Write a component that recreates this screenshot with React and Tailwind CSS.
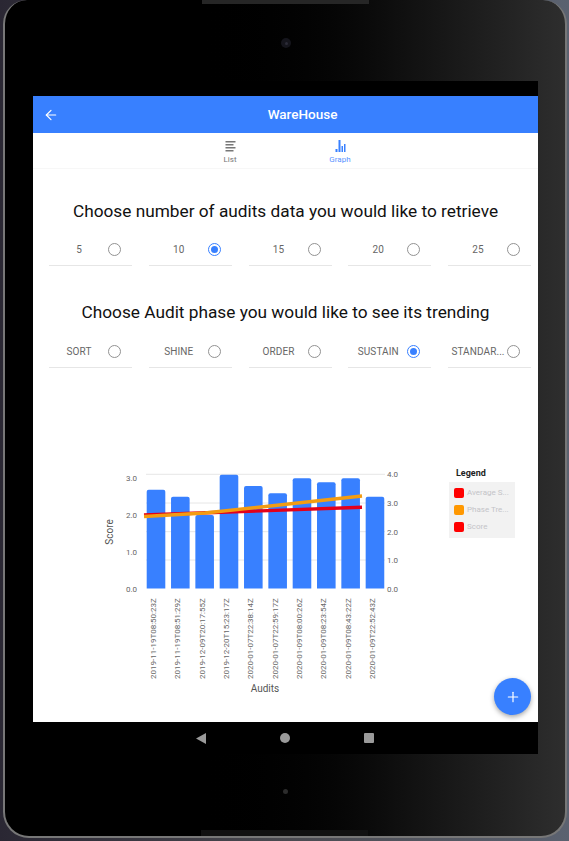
import { ArrowLeft, Plus } from "lucide-react";

const counts = ["5", "10", "15", "20", "25"];
const phases = ["SORT", "SHINE", "ORDER", "SUSTAIN", "STANDAR..."];

const bars = [489.7, 496.7, 515, 474.7, 486, 493.3, 478.3, 482.3, 478.3, 496.7];
const dates = [
  "2019-11-19T08:50:23Z",
  "2019-11-19T08:51:29Z",
  "2019-12-09T20:17:55Z",
  "2019-12-20T15:23:17Z",
  "2020-01-07T22:38:14Z",
  "2020-01-07T22:59:17Z",
  "2020-01-09T08:00:26Z",
  "2020-01-09T08:23:54Z",
  "2020-01-09T08:43:22Z",
  "2020-01-09T22:52:43Z",
];

function Radio({ on }) {
  return (
    <span
      className={`flex h-[13px] w-[13px] shrink-0 items-center justify-center rounded-full border-[1.5px] ${
        on ? "border-[#3880ff]" : "border-[#929292]"
      }`}
    >
      {on && <span className="h-[7px] w-[7px] rounded-full bg-[#3880ff]" />}
    </span>
  );
}

function RadioRow({ items, selected, rowClass }) {
  return (
    <div className={`flex justify-between pl-4 pr-[7px] ${rowClass}`}>
      {items.map((item) => (
        <div
          key={item}
          className="flex h-[33px] w-[83px] items-center border-b border-[#e6e6e6] pr-[11px]"
        >
          <span className="flex-1 whitespace-nowrap pl-[1px] text-center text-[10px] tracking-[0.1px] text-[#666]">
            {item}
          </span>
          <Radio on={item === selected} />
        </div>
      ))}
    </div>
  );
}

function Chart() {
  const gridLines = [474.3, 503, 531.7, 560];
  const left = [
    ["3.0", 481],
    ["2.0", 518],
    ["1.0", 555],
    ["0.0", 592],
  ];
  const right = [
    ["4.0", 477],
    ["3.0", 506],
    ["2.0", 535],
    ["1.0", 563],
    ["0.0", 592],
  ];
  return (
    <svg width="335" height="235" viewBox="95 465 335 235" className="shrink-0">
      {gridLines.map((y) => (
        <line key={y} x1="146" x2="385" y1={y} y2={y} stroke="#e6e6e6" strokeWidth="1" />
      ))}
      {bars.map((top, i) => {
        const x = 146.7 + i * 24.33;
        return (
          <path
            key={i}
            d={`M${x} 588.6V${top + 2}a2 2 0 0 1 2-2h14.6a2 2 0 0 1 2 2V588.6Z`}
            fill="#3880ff"
          />
        );
      })}
      <line x1="144" y1="515" x2="362" y2="507.3" stroke="#e3001b" strokeWidth="3.4" />
      <polyline
        points="144,516.5 205,513 362,496"
        fill="none"
        stroke="#f39c12"
        strokeWidth="3.4"
      />
      <g fontSize="8" fill="#666">
        {left.map(([t, y]) => (
          <text key={t} x="137" y={y} textAnchor="end">
            {t}
          </text>
        ))}
        {right.map(([t, y]) => (
          <text key={t} x="387" y={y}>
            {t}
          </text>
        ))}
        {dates.map((d, i) => {
          const x = 156 + i * 24.33;
          return (
            <text key={d} transform={`translate(${x} 679) rotate(-90)`}>
              {d}
            </text>
          );
        })}
      </g>
      <text
        transform="translate(113 532) rotate(-90)"
        textAnchor="middle"
        fontSize="10"
        fill="#555"
      >
        Score
      </text>
      <text x="265" y="692" textAnchor="middle" fontSize="10" fill="#555">
        Audits
      </text>
    </svg>
  );
}

function Legend() {
  const rows = [
    ["Average S...", "bg-[#ff0000]"],
    ["Phase Tre...", "bg-[#ff9800]"],
    ["Score", "bg-[#ff0000]"],
  ];
  return (
    <div className="ml-[19px] mt-[3px] w-[66px]">
      <div className="pl-[7px] text-[9px] leading-[11px] font-bold text-[#222]">Legend</div>
      <div className="mt-[3px] flex h-[56px] flex-col justify-center gap-[7px] bg-[#f2f2f2] pl-[5px]">
        {rows.map(([label, color]) => (
          <div key={label} className="flex items-center gap-[3px]">
            <span className={`h-[10px] w-[10px] rounded-[2px] ${color}`} />
            <span className="text-[8px] leading-[10px] whitespace-nowrap text-[#c4c4c8]">
              {label}
            </span>
          </div>
        ))}
      </div>
    </div>
  );
}

function ListIcon() {
  return (
    <svg width="11" height="11" viewBox="0 0 11 11" fill="#777">
      <rect x="0.5" y="0" width="10" height="1.5" />
      <rect x="0.5" y="3" width="8" height="1.5" />
      <rect x="0.5" y="6" width="10" height="1.5" />
      <rect x="0.5" y="9" width="8" height="1.5" />
    </svg>
  );
}

function GraphIcon() {
  return (
    <svg width="11" height="12" viewBox="0 0 11 12" fill="#3880ff">
      <rect x="0.5" y="9" width="2" height="3" />
      <rect x="3.5" y="0" width="2" height="12" />
      <rect x="6.5" y="6" width="1.5" height="6" />
      <rect x="9" y="4" width="1.5" height="8" />
    </svg>
  );
}

export default function App() {
  return (
    <div className="h-[841px] w-[569px] overflow-hidden bg-gradient-to-r from-[#2a2733] via-[#4a4a50] to-[#5b6270] pl-[3px] font-['Roboto',sans-serif]">
      <div className="relative h-[838px] w-[564px] rounded-b-[26px] rounded-t-[24px] border-x-2 border-b-2 border-[#777] bg-gradient-to-r from-[#000000] from-[32%] to-[#2e2e2e] pl-[28px] pt-[81px]">
        <div className="absolute left-[197px] top-0 h-[4px] w-[167px] bg-[#262626]" />
        <div className="absolute left-[276px] top-[38px] flex h-[10px] w-[10px] items-center justify-center rounded-full bg-[#15151c]">
          <span className="h-[3px] w-[3px] rounded-full bg-[#2c2c38]" />
        </div>
        <div className="absolute left-[278px] top-[789px] h-[5px] w-[5px] rounded-full bg-[#2c2c2c]" />
        <div className="absolute left-[196px] top-[830px] h-[6px] w-[167px] bg-[#111]" />

        <div className="flex h-[673px] w-[505px] flex-col bg-black">
          <div className="h-[15px] shrink-0" />
          <div className="relative flex h-[37px] shrink-0 items-center justify-center bg-[#3880ff] pl-[34px] shadow-[0_1px_2px_rgba(0,0,0,0.2)]">
            <ArrowLeft className="absolute left-[10px] h-[16px] w-[16px] text-white" strokeWidth={1.8} />
            <span className="text-[13.5px] font-medium text-white">WareHouse</span>
          </div>
          <div className="relative flex-1 bg-white">
            <div className="flex h-[36px] justify-center gap-[72px] border-b border-[#f7f7f7] pr-[1px]">
              <div className="flex w-[38px] flex-col items-center pt-[8px]">
                <ListIcon />
                <span className="mt-[3px] text-[8px] leading-[10px] text-[#777]">List</span>
              </div>
              <div className="flex w-[38px] flex-col items-center pt-[7px]">
                <GraphIcon />
                <span className="mt-[3px] text-[8px] leading-[10px] text-[#5a94ff]">Graph</span>
              </div>
            </div>
            <h2 className="mt-[32px] text-center text-[17.25px] leading-[20px] text-[#111]">
              Choose number of audits data you would like to retrieve
            </h2>
            <RadioRow items={counts} selected="10" rowClass="mt-[12px]" />
            <h2 className="mt-[36px] text-center text-[17.25px] leading-[20px] text-[#111]">
              Choose Audit phase you would like to see its trending
            </h2>
            <RadioRow items={phases} selected="SUSTAIN" rowClass="mt-[13px]" />
            <div className="mt-[97px] flex pl-[62px]">
              <Chart />
              <Legend />
            </div>
            <button className="absolute bottom-[7px] right-[7px] flex h-[37px] w-[37px] items-center justify-center rounded-full bg-[#3880ff] shadow-[0_2px_5px_rgba(0,0,0,0.35)]">
              <Plus className="h-[16px] w-[16px] text-white" strokeWidth={1.8} />
            </button>
          </div>
          <div className="flex h-[32px] shrink-0 items-center justify-center gap-[74px] pr-[2px]">
            <svg width="10" height="11" viewBox="0 0 10 11" fill="#9a9a9a">
              <path d="M0 5.5 10 0V11Z" />
            </svg>
            <span className="h-[10px] w-[10px] rounded-full bg-[#9a9a9a]" />
            <span className="h-[10px] w-[10px] rounded-[1px] bg-[#9a9a9a]" />
          </div>
        </div>
      </div>
    </div>
  );
}
